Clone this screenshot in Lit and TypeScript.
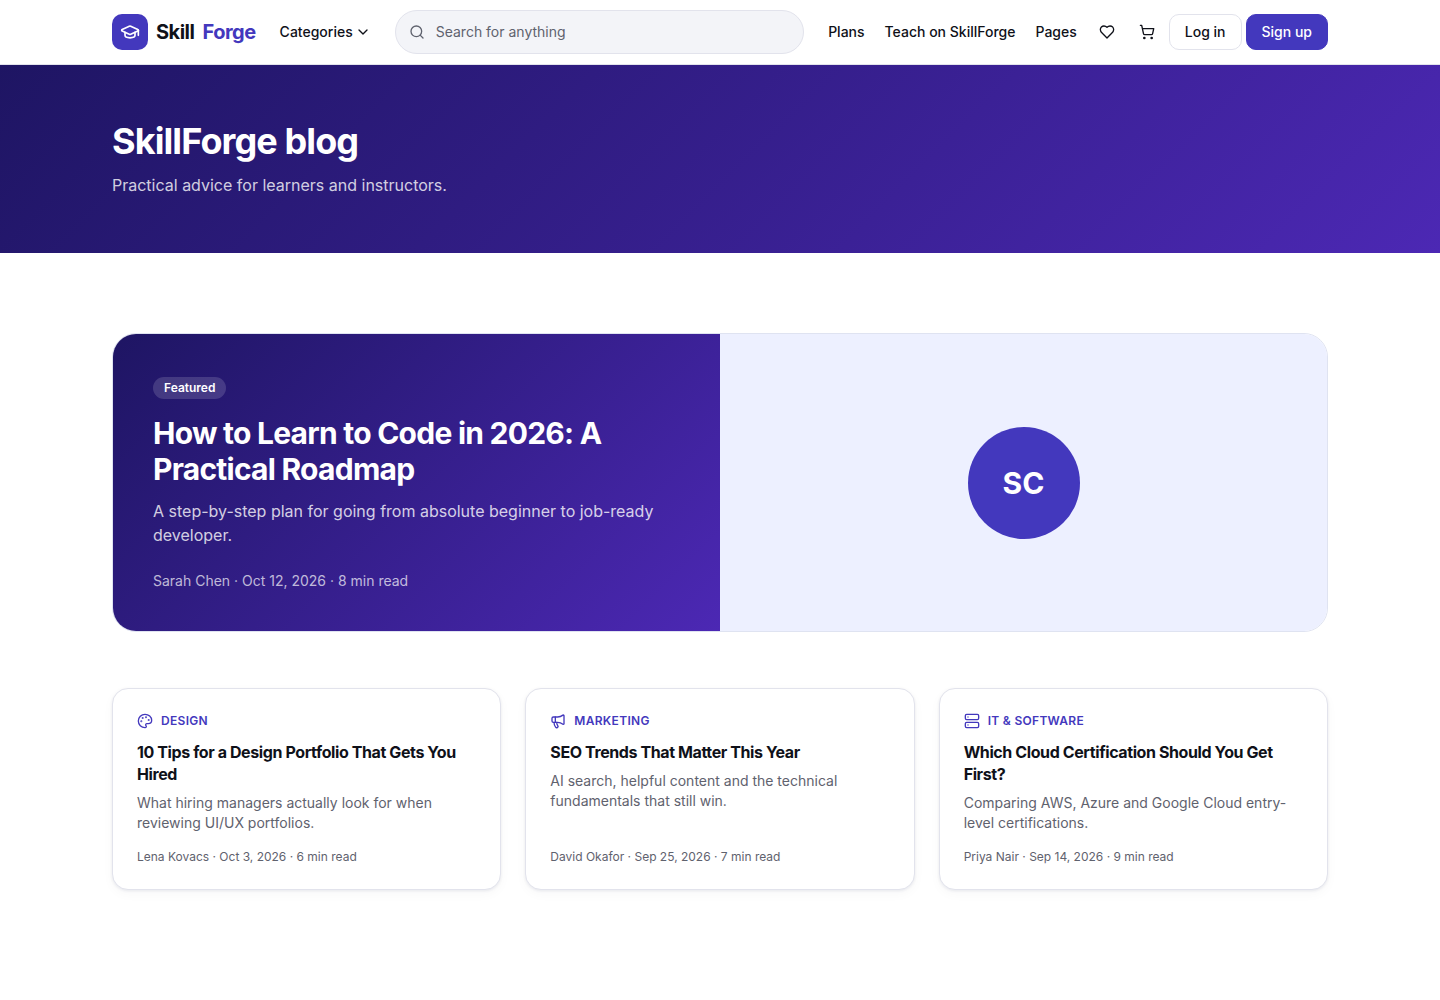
import { LitElement, html, css, svg } from "lit";
import { customElement, property } from "lit/decorators.js";

const icons: Record<string, unknown> = {
  cap: svg`<path d="M21.42 10.922a1 1 0 0 0-.019-1.838L12.83 5.18a2 2 0 0 0-1.66 0L2.6 9.08a1 1 0 0 0 0 1.832l8.57 3.908a2 2 0 0 0 1.66 0z"/><path d="M22 10v6"/><path d="M6 12.5V16a6 3 0 0 0 12 0v-3.5"/>`,
  chevron: svg`<path d="m6 9 6 6 6-6"/>`,
  search: svg`<circle cx="11" cy="11" r="8"/><path d="m21 21-4.3-4.3"/>`,
  heart: svg`<path d="M19 14c1.49-1.46 3-3.21 3-5.5A5.5 5.5 0 0 0 16.5 3c-1.76 0-3 .5-4.5 2-1.5-1.5-2.74-2-4.5-2A5.5 5.5 0 0 0 2 8.5c0 2.3 1.5 4.05 3 5.5l7 7Z"/>`,
  cart: svg`<circle cx="8" cy="21" r="1"/><circle cx="19" cy="21" r="1"/><path d="M2.05 2.05h2l2.66 12.42a2 2 0 0 0 2 1.58h9.78a2 2 0 0 0 1.95-1.57l1.65-7.43H5.12"/>`,
  palette: svg`<path d="M12 22a1 1 0 0 1 0-20 10 9 0 0 1 10 9 5 5 0 0 1-5 5h-2.25a1.75 1.75 0 0 0-1.4 2.8l.3.4a1.75 1.75 0 0 1-1.4 2.8z"/><circle cx="13.5" cy="6.5" r=".5" fill="currentColor"/><circle cx="17.5" cy="10.5" r=".5" fill="currentColor"/><circle cx="6.5" cy="12.5" r=".5" fill="currentColor"/><circle cx="8.5" cy="7.5" r=".5" fill="currentColor"/>`,
  megaphone: svg`<path d="M11 6a13 13 0 0 0 8.4-2.8A1 1 0 0 1 21 4v12a1 1 0 0 1-1.6.8A13 13 0 0 0 11 14H5a2 2 0 0 1-2-2V8a2 2 0 0 1 2-2z"/><path d="M6 14a12 12 0 0 0 2.4 7.2 2 2 0 0 0 3.2-2.4A8 8 0 0 1 10 14"/><path d="M8 6v8"/>`,
  server: svg`<rect width="20" height="8" x="2" y="2" rx="2" ry="2"/><rect width="20" height="8" x="2" y="14" rx="2" ry="2"/><path d="M6 6h.01"/><path d="M6 18h.01"/>`,
};

@customElement("sf-icon")
export class SfIcon extends LitElement {
  @property() name = "";
  static styles = css`
    :host { display: block; flex: none; width: 16px; height: 16px; }
    .glyph { display: block; width: 100%; height: 100%; }
  `;
  render() {
    return html`<svg class="glyph" viewBox="0 0 24 24" fill="none" stroke="currentColor"
      stroke-width="2" stroke-linecap="round" stroke-linejoin="round" aria-hidden="true">${icons[this.name]}</svg>`;
  }
}

interface Post {
  icon: string;
  category: string;
  title: string;
  excerpt: string;
  meta: string;
}

const posts: Post[] = [
  {
    icon: "palette",
    category: "Design",
    title: "10 Tips for a Design Portfolio That Gets You Hired",
    excerpt: "What hiring managers actually look for when reviewing UI/UX portfolios.",
    meta: "Lena Kovacs · Oct 3, 2026 · 6 min read",
  },
  {
    icon: "megaphone",
    category: "Marketing",
    title: "SEO Trends That Matter This Year",
    excerpt: "AI search, helpful content and the technical fundamentals that still win.",
    meta: "David Okafor · Sep 25, 2026 · 7 min read",
  },
  {
    icon: "server",
    category: "IT & Software",
    title: "Which Cloud Certification Should You Get First?",
    excerpt: "Comparing AWS, Azure and Google Cloud entry-level certifications.",
    meta: "Priya Nair · Sep 14, 2026 · 9 min read",
  },
];

@customElement("app-root")
export class AppRoot extends LitElement {
  static styles = css`
    :host {
      display: block;
      min-height: 100vh;
      background: #fff;
      color: #0f1119;
      font-family: Inter, "Liberation Sans", sans-serif;
      font-size: 14px;
      line-height: 20px;
      --brand: #4338bd;
      --gradient: linear-gradient(135deg, #1e1563 0%, #4c28b4 100%);
      --line: #e2e3ec;
      --muted: #5f626e;
    }
    *, *::before, *::after { box-sizing: border-box; }
    h1, h2, h3, p { margin: 0; }
    a { color: inherit; text-decoration: none; }
    button { font: inherit; color: inherit; cursor: pointer; }
    .container { max-width: 1280px; margin: 0 auto; padding: 0 32px; }
    .header { border-bottom: 1px solid var(--line); background: #fff; }
    .bar { display: flex; align-items: center; gap: 24px; height: 64px; }
    .logo { display: flex; align-items: center; gap: 8px; font-size: 20px; line-height: 28px; font-weight: 700; letter-spacing: -0.025em; }
    .mark { display: grid; place-items: center; width: 36px; height: 36px; border-radius: 10px; background: var(--brand); color: #fff; }
    .mark sf-icon { width: 20px; height: 20px; }
    .accent { color: var(--brand); }
    .categories { display: flex; align-items: center; gap: 2px; padding: 0; border: 0; background: none; font-weight: 500; }
    .search { flex: 1; display: flex; align-items: center; gap: 11px; min-width: 0; height: 44px; padding: 0 13px; border: 1px solid var(--line); border-radius: 22px; background: #f3f4f8; color: var(--muted); }
    .field { flex: 1; min-width: 0; padding: 0; border: 0; outline: 0; background: none; font: inherit; color: #0f1119; }
    .field::placeholder { color: var(--muted); opacity: 1; }
    .actions { display: flex; align-items: center; gap: 12px; }
    .links { display: flex; gap: 20px; font-weight: 500; }
    .buttons { display: flex; align-items: center; gap: 4px; }
    .icon-button { display: grid; place-items: center; width: 36px; height: 36px; padding: 0; border: 0; border-radius: 10px; background: none; }
    .button { display: flex; align-items: center; height: 36px; padding: 0 15px; border: 1px solid var(--line); border-radius: 10px; font-weight: 500; }
    .primary { border-color: var(--brand); background: var(--brand); color: #fff; }
    .hero { padding: 56px 0; background: var(--gradient); color: #fff; }
    .hero-title { font-size: 36px; line-height: 40px; font-weight: 700; letter-spacing: -0.025em; }
    .hero-text { margin-top: 12px; font-size: 16px; line-height: 24px; color: rgb(255 255 255 / 0.8); }
    .main { padding-top: 80px; padding-bottom: 80px; }
    .featured { display: grid; grid-template-columns: 1fr 1fr; overflow: hidden; border: 1px solid #dfe3f1; border-radius: 24px; }
    .story { padding: 40px; background: var(--gradient); color: #fff; }
    .badge-row { display: flex; padding-top: 3px; }
    .badge { padding: 3px 11px; border-radius: 11px; background: rgb(255 255 255 / 0.15); font-size: 12px; line-height: 16px; font-weight: 600; }
    .story-title { margin-top: 16px; font-size: 30px; line-height: 36px; font-weight: 700; letter-spacing: -0.025em; }
    .story-text { margin-top: 12px; font-size: 16px; line-height: 24px; color: rgb(255 255 255 / 0.8); }
    .story-meta { margin-top: 24px; color: rgb(255 255 255 / 0.7); }
    .author { display: grid; place-items: center; background: #edf0ff; }
    .avatar { display: grid; place-items: center; width: 112px; height: 112px; border-radius: 50%; background: var(--brand); color: #fff; font-size: 30px; line-height: 36px; font-weight: 700; }
    .posts { display: grid; grid-template-columns: repeat(3, 1fr); gap: 24px; margin-top: 56px; }
    .card { display: flex; flex-direction: column; padding: 24px; border: 1px solid var(--line); border-radius: 16px; background: #fff; box-shadow: 0 1px 3px rgb(16 24 64 / 0.08), 0 4px 12px rgb(16 24 64 / 0.03); }
    .category { display: flex; align-items: center; gap: 8px; font-size: 12px; line-height: 16px; font-weight: 600; letter-spacing: 0.025em; text-transform: uppercase; color: var(--brand); }
    .card-title { margin-top: 12px; font-size: 16px; line-height: 22px; font-weight: 700; letter-spacing: -0.025em; }
    .excerpt { margin-top: 8px; color: var(--muted); }
    .meta { margin-top: auto; padding-top: 16px; font-size: 12px; line-height: 16px; color: var(--muted); }
  `;

  render() {
    return html`
      <header class="header">
        <div class="container bar">
          <a class="logo" href="#">
            <span class="mark"><sf-icon name="cap"></sf-icon></span>
            <span>Skill</span><span class="accent">Forge</span>
          </a>
          <button class="categories" type="button">Categories <sf-icon name="chevron"></sf-icon></button>
          <label class="search">
            <sf-icon name="search"></sf-icon>
            <input class="field" type="search" placeholder="Search for anything" aria-label="Search for anything" />
          </label>
          <div class="actions">
            <nav class="links">
              <a href="#plans">Plans</a>
              <a href="#teach">Teach on SkillForge</a>
              <a href="#pages">Pages</a>
            </nav>
            <div class="buttons">
              <button class="icon-button" type="button" aria-label="Wishlist"><sf-icon name="heart"></sf-icon></button>
              <button class="icon-button" type="button" aria-label="Cart"><sf-icon name="cart"></sf-icon></button>
              <a class="button" href="#login">Log in</a>
              <a class="button primary" href="#signup">Sign up</a>
            </div>
          </div>
        </div>
      </header>
      <section class="hero">
        <div class="container">
          <h1 class="hero-title">SkillForge blog</h1>
          <p class="hero-text">Practical advice for learners and instructors.</p>
        </div>
      </section>
      <main class="container main">
        <a class="featured" href="#featured">
          <div class="story">
            <div class="badge-row"><span class="badge">Featured</span></div>
            <h2 class="story-title">How to Learn to Code in 2026: A Practical Roadmap</h2>
            <p class="story-text">A step-by-step plan for going from absolute beginner to job-ready developer.</p>
            <p class="story-meta">Sarah Chen · Oct 12, 2026 · 8 min read</p>
          </div>
          <div class="author"><span class="avatar">SC</span></div>
        </a>
        <div class="posts">
          ${posts.map(
            (post) => html`
              <a class="card" href="#post">
                <div class="category"><sf-icon name=${post.icon}></sf-icon><span>${post.category}</span></div>
                <h3 class="card-title">${post.title}</h3>
                <p class="excerpt">${post.excerpt}</p>
                <p class="meta">${post.meta}</p>
              </a>
            `,
          )}
        </div>
      </main>
    `;
  }
}
